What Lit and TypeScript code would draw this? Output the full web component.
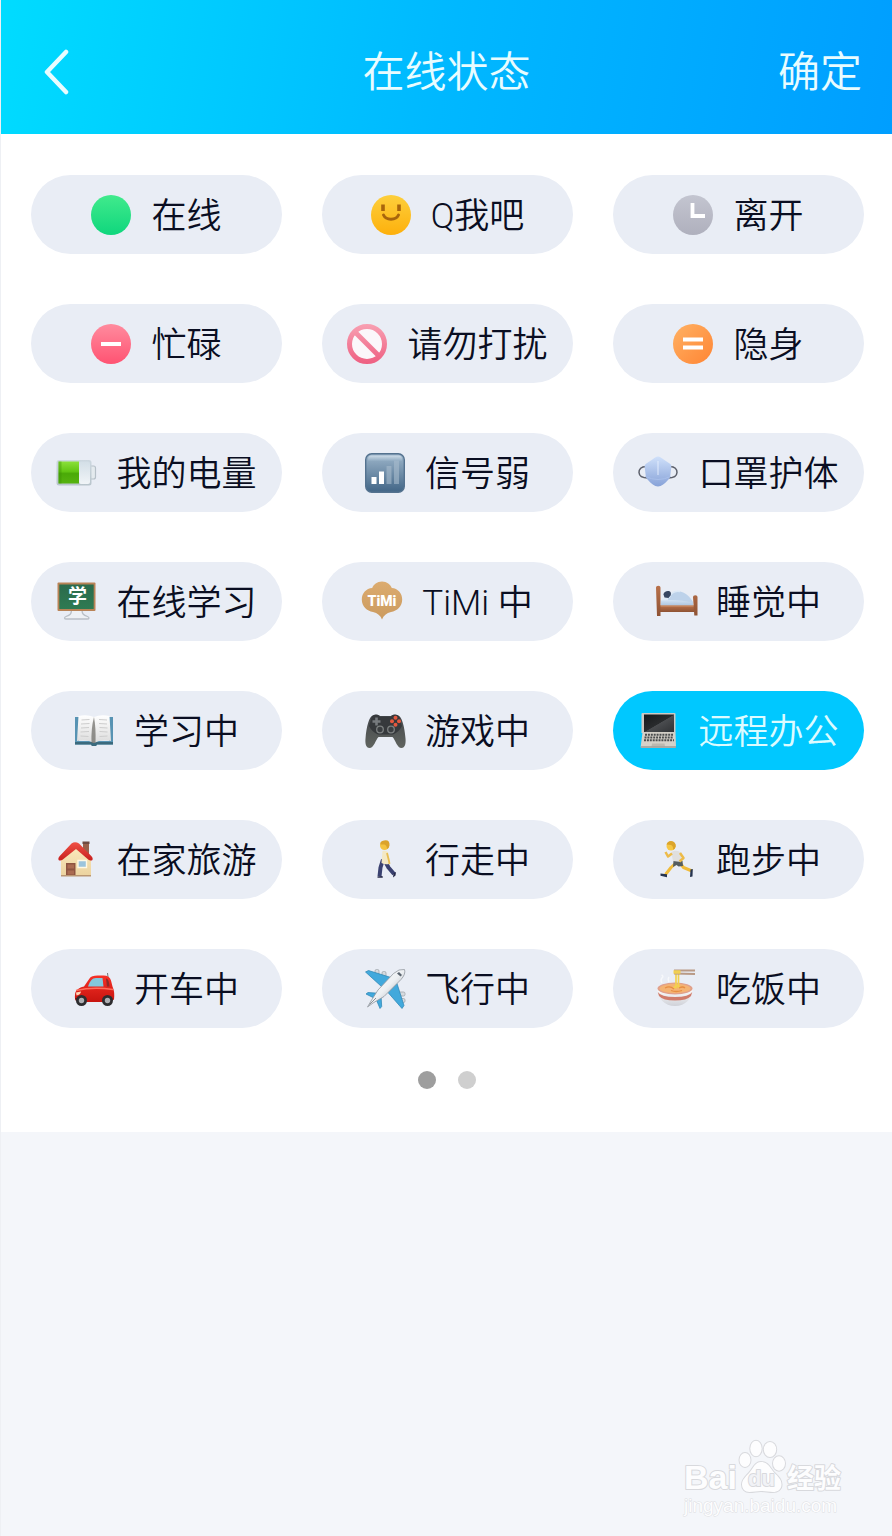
import { LitElement, html, svg, css, SVGTemplateResult } from "lit";
import { customElement, property, state } from "lit/decorators.js";
import { classMap } from "lit/directives/class-map.js";

interface Status {
  id: string;
  label: string;
}

const STATUSES: Status[] = [
  { id: "online", label: "在线" },
  { id: "qme", label: "Q我吧" },
  { id: "away", label: "离开" },
  { id: "busy", label: "忙碌" },
  { id: "dnd", label: "请勿打扰" },
  { id: "invisible", label: "隐身" },
  { id: "battery", label: "我的电量" },
  { id: "signal", label: "信号弱" },
  { id: "mask", label: "口罩护体" },
  { id: "class", label: "在线学习" },
  { id: "timi", label: "TiMi 中" },
  { id: "sleep", label: "睡觉中" },
  { id: "study", label: "学习中" },
  { id: "game", label: "游戏中" },
  { id: "remote", label: "远程办公" },
  { id: "home", label: "在家旅游" },
  { id: "walk", label: "行走中" },
  { id: "run", label: "跑步中" },
  { id: "drive", label: "开车中" },
  { id: "fly", label: "飞行中" },
  { id: "eat", label: "吃饭中" },
];

/* Vertical two-stop gradient shared by most of the icons. */
const fade = (id: string, from: string, to: string) => svg`
  <linearGradient id=${id} x1="0" y1="0" x2="0" y2="1">
    <stop offset="0" stop-color=${from}></stop>
    <stop offset="1" stop-color=${to}></stop>
  </linearGradient>`;

const ICONS: Record<string, SVGTemplateResult> = {
  online: svg`
    ${fade("g", "#41ea8c", "#0fd67d")}
    <circle cx="20" cy="20" r="20" fill="url(#g)"></circle>`,

  qme: svg`
    ${fade("g", "#fdcf3c", "#fdb00c")}
    <circle cx="20" cy="20" r="20" fill="url(#g)"></circle>
    <path d="M12 9.500v6.500M28 9.500v6.500" stroke="#a8650c" stroke-width="3.600"></path>
    <path d="M12.500 20c2.500 5.500 12.500 5.500 15 0" fill="none" stroke="#a8650c" stroke-width="3" stroke-linecap="round"></path>`,

  away: svg`
    ${fade("g", "#c3c5d0", "#afb0bd")}
    <circle cx="20" cy="20" r="20" fill="url(#g)"></circle>
    <path d="M19.500 8v13h12.500" fill="none" stroke="#fff" stroke-width="3.800"></path>`,

  busy: svg`
    ${fade("g", "#ff8b9e", "#ff5372")}
    <circle cx="20" cy="20" r="20" fill="url(#g)"></circle>
    <rect x="10" y="18" width="20" height="4" fill="#fff"></rect>`,

  dnd: svg`
    <linearGradient id="g" gradientUnits="userSpaceOnUse" x1="0" y1="0" x2="0" y2="40">
      <stop offset="0" stop-color="#f8a0b2"></stop>
      <stop offset="1" stop-color="#ee5f81"></stop>
    </linearGradient>
    <circle cx="20" cy="20" r="17.500" fill="#fbf7fa" stroke="url(#g)" stroke-width="5"></circle>
    <path d="M8 8l24 24" stroke="url(#g)" stroke-width="5"></path>`,

  invisible: svg`
    <linearGradient id="g" x1="0" y1="0" x2="1" y2="1">
      <stop offset="0" stop-color="#ffb163"></stop>
      <stop offset="1" stop-color="#ff8534"></stop>
    </linearGradient>
    <circle cx="20" cy="20" r="20" fill="url(#g)"></circle>
    <rect x="10" y="13.500" width="20" height="4" fill="#fff"></rect>
    <rect x="10" y="21.500" width="20" height="4" fill="#fff"></rect>`,

  battery: svg`
    ${fade("b", "#cdd8e0", "#b9c5cc")}
    ${fade("w", "#d3dfe7", "#f0f4f7")}
    <linearGradient id="g" x1="0" y1="0" x2="0" y2="1">
      <stop offset="0" stop-color="#8be03a"></stop>
      <stop offset="0.450" stop-color="#62c614"></stop>
      <stop offset="0.550" stop-color="#4aaa08"></stop>
      <stop offset="1" stop-color="#56b30f"></stop>
    </linearGradient>
    <rect x="33" y="13" width="6.500" height="13" rx="2" fill="#e4eaee" stroke="#b6c0c8" stroke-width="1.200"></rect>
    <rect x="0.500" y="7" width="35" height="25.500" rx="2.500" fill="url(#b)"></rect>
    <rect x="23" y="8.500" width="11" height="22.500" rx="2" fill="url(#w)"></rect>
    <rect x="2.500" y="8.500" width="20.500" height="22" fill="url(#g)"></rect>
    <rect x="2.500" y="8.500" width="3" height="22" fill="#3c9204" opacity="0.400"></rect>`,

  signal: svg`
    ${fade("g", "#9eb6cb", "#416586")}
    ${fade("h", "#d9e5ef", "#90abc2")}
    <rect x="0.700" y="0.700" width="38.600" height="38.600" rx="6" fill="url(#g)" stroke="#54728f" stroke-width="1.400"></rect>
    <path d="M3 6q0-3.500 3.500-3.500h27q3.500 0 3.500 3.500v2H3z" fill="url(#h)" opacity="0.800"></path>
    <rect x="6.500" y="24" width="5" height="7" fill="#fff"></rect>
    <rect x="14" y="18.500" width="5" height="12.500" fill="#fff"></rect>
    <rect x="21.500" y="13" width="5" height="18" fill="#a9bccd" opacity="0.600"></rect>
    <rect x="29" y="7.500" width="5" height="23.500" fill="#a9bccd" opacity="0.600"></rect>`,

  mask: svg`
    ${fade("g", "#cfe0fa", "#87a2d8")}
    <path d="M9 13.500C3 13 .800 16.500 1 19.500s3 5.500 9 5.500M31 13.500c6-.500 8.200 3 8 6s-3 5.500-9 5.500" fill="none" stroke="#5d616c" stroke-width="1.500"></path>
    <path d="M20 3.500c2 0 3.500 1.500 6 3.200l6 4c1.200 1 1.500 2 1.300 3.500l-1 8.300c-.200 2-.900 3-2.300 4.500-3 3.500-6.500 6.500-10 6.500s-7-3-10-6.500c-1.400-1.500-2.100-2.500-2.300-4.500l-1-8.300c-.200-1.500.100-2.500 1.300-3.500l6-4c2.500-1.700 4-3.200 6-3.200z" fill="url(#g)"></path>
    <path d="M20 8v14" stroke="#e9f1ff" stroke-width="1.500" opacity="0.600"></path>
    <path d="M7.500 23.500q12.500 6 25 0" fill="none" stroke="#a8bfea" stroke-width="1"></path>`,

  class: svg`
    ${fade("g", "#2b6b4c", "#2e7a52")}
    <path d="M15.500 28c0 4-1.500 5-5.500 6.500-2 .800-2 2.500.500 2.500h20.500c2.500 0 2.500-1.700.500-2.500C27.500 33 26 32 26 28" fill="#eef1f5" stroke="#b9bfc6" stroke-width="1.300"></path>
    <rect x="1.500" y="0.500" width="38" height="28.500" rx="1" fill="#b98356"></rect>
    <rect x="3.300" y="2.500" width="34.400" height="24.500" fill="url(#g)"></rect>
    <text class="glyph-study" x="21.500" y="21" text-anchor="middle">学</text>`,

  timi: svg`
    ${fade("g", "#dcac70", "#cb9a5e")}
    <path d="M20 -.500c5 0 8.500 3 9.800 6.500 6 .500 10.400 5 10.400 11.500 0 7-5.200 11.500-11.200 12.500-4.500 1-7.500 3.500-9 7.500-1.500-4-4.500-6.500-9-7.500-6-1-11.200-5.500-11.200-12.500 0-6.500 4.400-11 10.400-11.500C11.500 2.500 15 -.500 20 -.500z" fill="url(#g)"></path>
    <text class="glyph-timi" x="20" y="24" text-anchor="middle">TiMi</text>`,

  sleep: svg`
    ${fade("w", "#b9714a", "#8e5233")}
    ${fade("q", "#d3e3f4", "#8eacd0")}
    <path d="M5 18l9-4.500h10l12 6V28H5z" fill="#dfe9f5"></path>
    <path d="M12 17c2-6 7-8.500 12-7.500s10 5 13 10.500v4l-24-3z" fill="#bdd2ea"></path>
    <path d="M5 18.500c8-1 22-1 32 2.500V28H5z" fill="url(#q)"></path>
    <path d="M13 16c2-5 6-7.500 11-6.500" fill="none" stroke="#dce9f7" stroke-width="1.500"></path>
    <path d="M7.500 12.500c0-2.500 3-4 5.500-3.500 2 .500 2.500 2.500 1.500 4.500l-2 2.500-4-.500z" fill="#394660"></path>
    <path d="M4 23.500h34V30H4z" fill="url(#w)"></path>
    <path d="M4 24h34" stroke="#d0936c" stroke-width="1.200"></path>
    <path d="M0 5.500q0-1.800 2.300-1.800T4.500 5.500V34H1zM37 15q0-1.800 2.300-1.800T41.500 15v18.500h-3.200z" fill="url(#w)"></path>`,

  study: svg`
    ${fade("p", "#ffffff", "#dcdcdc")}
    <path d="M1 6h4v24h30V6h4v27.500H23l-1 1.500h-4l-1-1.500H1z" fill="#5793b3"></path>
    <path d="M1 33.500V31h38v2.500H23l-1 1.500h-4l-1-1.500z" fill="#3b6a7d"></path>
    <path d="M4.500 5Q13 3 20 6q7-3 15.500-1l1.500 25q-10-2-17 2-7-4-17-2z" fill="url(#p)"></path>
    <path d="M20 6q-3 11-2.500 26h4Q22 17 20 6z" fill="#6a6863" opacity="0.700"></path>
    <path d="M7.500 9l8-.500M7 13l8.500-.500M7 17l8-.500M6.500 21l8.500-.500M6.500 25l8 .500M25 8.500l8 .500M25 12.500l8 .500M25.500 16.500l8 .500M25.500 20.500l8 .500M25.500 25.500l8-.500" stroke="#cdcdcd" stroke-width="1"></path>`,

  game: svg`
    ${fade("g", "#44474b", "#60645f")}
    <path d="M8 4.500c2-1.500 5-1.500 7 .500h11c2-2 5-2 7-.500 4 1 6.500 11 7.500 23 .500 5-.500 9.500-4 9.500-4.500 0-6-8-9-11h-14c-3 3-4.500 11-9 11-3.500 0-4.500-4.500-4-9.500C1.500 15.500 4 5.500 8 4.500z" fill="url(#g)"></path>
    <path d="M7 5c3-2 6-1.500 8 .700h11c2-2.200 5-2.700 8-.700l3 10q-3 6-9 8.500H13Q7 21 4 15z" fill="#36393c"></path>
    <path d="M11.500 6.500v8M7.500 10.500h8" stroke="#777b7e" stroke-width="2.600"></path>
    <g fill="#e5583e"><circle cx="30.500" cy="6.700" r="2"></circle><circle cx="30.500" cy="13.700" r="2"></circle><circle cx="27" cy="10.200" r="2"></circle><circle cx="34" cy="10.200" r="2"></circle></g>
    <g fill="#3a3d40" stroke="#7d8181" stroke-width="1.300"><circle cx="15" cy="18.500" r="3.300"></circle><circle cx="26" cy="18.500" r="3.300"></circle></g>`,

  remote: svg`
    <linearGradient id="s" x1="0" y1="0" x2="1" y2="1">
      <stop offset="0" stop-color="#17191b"></stop>
      <stop offset="0.500" stop-color="#292b2d"></stop>
      <stop offset="0.520" stop-color="#4a4c4f"></stop>
      <stop offset="1" stop-color="#303235"></stop>
    </linearGradient>
    <path d="M4.500 2h32q1 0 1 1v19h-34V3q0-1 1-1z" fill="#cfcac3"></path>
    <path d="M6 3.500h30V21H6z" fill="url(#s)"></path>
    <path d="M4.500 21.500h33l.500 14q0 1.500-1.500 1.500H4q-1.500 0-1.300-1.500z" fill="#d5d1c9"></path>
    <g fill="none" stroke="#4b4d4e" stroke-width="1.900" stroke-dasharray="2 .900">
      <path d="M7 23.700h28M6.500 26.500h29M6 29.300h30"></path>
    </g>
    <path d="M14 32.500h12.500l.500 3H13.500z" fill="#bdb8af"></path>
    <path d="M3 36h35" stroke="#9e9c97" stroke-width="1.500"></path>`,

  home: svg`
    ${fade("r", "#ef5145", "#c8201e")}
    ${fade("w", "#fae9bb", "#ecd3a0")}
    <path d="M27 2.500h6V16h-6z" fill="#99604a"></path>
    <path d="M26.500 1.500h7v2.500h-7z" fill="#6f4a40"></path>
    <path d="M5 19L19.500 7 35 19v17H5z" fill="url(#w)"></path>
    <path d="M2.500 20Q1.800 18 3.500 16.200L15.500 3.500Q19 1 23 3.500L35.500 16.200Q37.300 18 36.500 20q-2 1.300-4-.200L20 9 6.500 19.800q-2 1.500-4 .200z" fill="url(#r)"></path>
    <path d="M10 23h9.500v13H10z" fill="#8e5541"></path>
    <path d="M11.500 24.500h6.500v4h-6.500zM11.500 30.500h6.500v4h-6.500z" fill="#aa6b51"></path>
    <path d="M22 20.500h8.500v7H22z" fill="#9cc4dc" stroke="#fff8e4" stroke-width="1.400"></path>
    <path d="M5 35h30v1.500H5z" fill="#ba9773"></path>`,

  walk: svg`
    <path d="M18 19.500l-2.500 8-1 9M19.500 20l4 7.500 5.500 6.500" fill="none" stroke="#3a4170" stroke-width="4" stroke-linejoin="round"></path>
    <path d="M12.500 36.500l5-.500.300 1.800h-5.300zM28.500 33.500l2.500-1.500-.500 3.500-2.500 2z" fill="#252848"></path>
    <path d="M17.500 11q4-1 5.500 1.500l1.500 6.500-.500 5q-4 1-7.500-1l.500-6z" fill="#f3e8c5"></path>
    <path d="M22 13l2 8 .500 3" fill="none" stroke="#e8bd52" stroke-width="1.800"></path>
    <circle cx="19.500" cy="5.500" r="4.500" fill="#f4c341"></circle>
    <path d="M15.300 4.500Q15 1 19 .500q6-1 5.500 5-.500 3-2.500 3.500 0-3.500-2.500-4.500z" fill="#dba32c"></path>`,

  run: svg`
    <path d="M21 22l-6 5.500-5.500 7M23 21.500l4.500 6 8.500 3.500" fill="none" stroke="#f0bb39" stroke-width="3" stroke-linejoin="round"></path>
    <path d="M4.500 33.500l6.500.800v3l-6.500-1.500zM34.500 29.500l2.300-.500-.300 7.500-2.500 .500z" fill="#26344f"></path>
    <path d="M17.500 20.500l9 .500.500 5-4.500.500-2-1.500-3.500 2z" fill="#555d5f"></path>
    <path d="M15.500 12q5-3 10 1l-.500 9-8-1-1-5z" fill="#e0dfde"></path>
    <path d="M16 13.500l-4 3-2.500-4.500M24 13l3.500 5-4 3.500" fill="none" stroke="#edbb49" stroke-width="2.500" stroke-linejoin="round"></path>
    <circle cx="15" cy="6" r="4.500" fill="#f6c744"></circle>
    <path d="M10.500 4.500Q11.500 1 15 1q5 .500 4.800 5.500Q19 9.500 17 9.500q.500-3.500-2-4.500z" fill="#dba42b"></path>`,

  drive: svg`
    ${fade("r", "#f73127", "#c7140f")}
    <path d="M33.500 4l1.200 9" stroke="#777" stroke-width="1"></path>
    <path d="M1 26c0-4.500 3-7 9-8.500l5.500-8c1.500-2.300 4-3 8-3h6c4 0 6.500 1.500 7.500 5l1.500 6c2 4 2 9 1.500 13L36 33H5c-3.500 0-4.500-3-4-7z" fill="url(#r)"></path>
    <path d="M14 17.500c2-5.500 4-8.500 8-8.500h6.500l1 8.500z" fill="#83c8dc"></path>
    <path d="M32 9.500c2 .500 3 2 3.500 8H33z" fill="#8d2a28"></path>
    <path d="M2 21.500q17-4 37-1" fill="none" stroke="#ff6e5c" stroke-width="1.400"></path>
    <path d="M2 23.500l5-1q-.500 3.500-4.500 4z" fill="#ffd6b8"></path>
    <path d="M1 29h9v3H2z" fill="#7c1511"></path>
    <circle cx="7.500" cy="31.500" r="5.500" fill="#2d2d30"></circle><circle cx="7.500" cy="31.500" r="2.700" fill="#aeb0b4"></circle>
    <circle cx="33.500" cy="31.500" r="5.500" fill="#2d2d30"></circle><circle cx="33.500" cy="31.500" r="2.700" fill="#aeb0b4"></circle>`,

  fly: svg`
    <linearGradient id="f" x1="0" y1="0" x2="1" y2="1">
      <stop offset="0" stop-color="#ffffff"></stop>
      <stop offset="0.500" stop-color="#edf0f3"></stop>
      <stop offset="1" stop-color="#8a9099"></stop>
    </linearGradient>
    <g fill="#d6dade" stroke="#a0a6ac" stroke-width="0.800">
      <rect x="10" y="0.500" width="4" height="6" rx="1.500"></rect><rect x="17" y="2.500" width="4" height="6" rx="1.500"></rect>
      <rect x="34" y="23" width="6" height="4" rx="1.500"></rect><rect x="34" y="29.500" width="6" height="4" rx="1.500"></rect>
    </g>
    <path d="M.500 3l3-1.500L26 8.500 17 18zM32 14.500L39 36.500l-2 3-14-16zM1 25l2-1.500 11 .800-4 5.200zM11 30l5-4 .700 11.500-1.700 2z" fill="#42a9dc" stroke="#2783b2" stroke-width="0.700"></path>
    <path d="M39.500.500q1.500 4.500-3.500 10L19 27.500 8 34l-5.500 4 3.500-6 7-11L28.500 4.500Q34-.500 39.500.500z" fill="url(#f)" stroke="#9298a0" stroke-width="0.800"></path>
    <path d="M34 3l3 3-1.500 1.500-3.500-3z" fill="#59636e"></path>
    <path d="M11 29l-6.500 6.500" stroke="#8b9198" stroke-width="1"></path>`,

  eat: svg`
    ${fade("b", "#ffffff", "#cfd1d8")}
    <path d="M6 14q-2-3 0-5t-.500-3M13 13q-1.500-3 0-5" fill="none" stroke="#fff" stroke-width="1.500" opacity="0.600"></path>
    <path d="M1.500 19.500c0 10 7 17.500 17.500 17.500s17.500-7.500 17.500-17.500z" fill="url(#b)"></path>
    <path d="M1.800 23q3 5 17.200 5t17.200-5l-1.200 4q-4 4.500-16 4.500T3 27z" fill="#d07c6c"></path>
    <ellipse cx="19" cy="19.500" rx="17.500" ry="6" fill="#e0a08c"></ellipse>
    <ellipse cx="19" cy="19.500" rx="15.500" ry="4.700" fill="#f4b373"></ellipse>
    <path d="M20 3.500v16M22.500 4v15M17.500 19q4-5 7 0" fill="none" stroke="#f3d14d" stroke-width="1.700"></path>
    <path d="M9 19q5-2.500 9 1m5-1q4-2 6 0m-14 2.500q5 2 11 0" fill="none" stroke="#e78d42" stroke-width="1.300"></path>
    <path d="M18 1.500l21 0M18 4.500l21 .500" stroke="#b99a86" stroke-width="1.900"></path>
    <path d="M17.500 3h7" stroke="#f1cf50" stroke-width="3.500"></path>`,
};

@customElement("status-icon")
export class StatusIcon extends LitElement {
  @property() name = "";

  static styles = css`
    :host {
      display: block;
      flex: none;
      width: 40px;
      height: 40px;
    }
    .icon {
      display: block;
      width: 100%;
      height: 100%;
      overflow: visible;
    }
    .glyph-study {
      font: 700 19px "Noto Sans CJK SC", sans-serif;
      fill: #fff;
    }
    .glyph-timi {
      font: 900 14px Roboto, "Liberation Sans", sans-serif;
      fill: #fff;
    }
  `;

  render() {
    return html`<svg class="icon" viewBox="0 0 40 40" aria-hidden="true">${ICONS[this.name]}</svg>`;
  }
}

@customElement("site-watermark")
export class SiteWatermark extends LitElement {
  static styles = css`
    :host {
      display: block;
      width: 160px;
      height: 80px;
    }
    .mark {
      display: block;
      overflow: visible;
      fill: #fdfdfe;
      stroke: #d8d9dd;
      stroke-width: 2px;
      stroke-linejoin: round;
      paint-order: stroke;
    }
    .bai {
      font: 700 34px "Liberation Sans", sans-serif;
    }
    .du {
      font: 700 22px "Liberation Sans", sans-serif;
      fill: #f1f2f6;
    }
    .cn {
      font: 700 27px "Noto Sans CJK SC", sans-serif;
    }
    .url {
      font: 400 19px "Liberation Sans", sans-serif;
      stroke: #dddee2;
      stroke-width: 1px;
    }
  `;

  render() {
    return html`
      <svg class="mark" width="160" height="80" viewBox="0 0 160 80" role="img" aria-label="Baidu 经验">
        <text class="bai" x="0" y="51">Bai</text>
        <ellipse cx="61" cy="22" rx="5.500" ry="7"></ellipse>
        <ellipse cx="72" cy="10.500" rx="5.700" ry="7.700"></ellipse>
        <ellipse cx="86" cy="11.500" rx="6.200" ry="7.500"></ellipse>
        <ellipse cx="95" cy="25.500" rx="6" ry="7.200"></ellipse>
        <path d="M77 24c7 0 9 6 13 10.500 4 4 7.500 7 7.500 12 0 5-4 7.500-8.500 7.500-4 0-8-1-12-1s-7 1-11.500 1c-4.500 0-7.500-3-7.500-7.500 0-5 4-8 7.500-12C69.500 30 71 24 77 24z"></path>
        <text class="du" x="64" y="48">du</text>
        <text class="cn" x="103" y="50">经验</text>
        <text class="url" x="0" y="74">jingyan.baidu.com</text>
      </svg>
    `;
  }
}

@customElement("app-root")
export class AppRoot extends LitElement {
  @state() private selected = "remote";
  @state() private page = 0;

  static styles = css`
    :host {
      display: flex;
      flex-direction: column;
      box-sizing: border-box;
      min-height: 100vh;
      border-left: 1px solid #eef0f4;
      background: #f4f6fa;
      color: #0a0e22;
      font-family: Roboto, "Noto Sans CJK SC", sans-serif;
      font-weight: 350;
    }
    button {
      margin: 0;
      padding: 0;
      border: 0;
      background: none;
      color: inherit;
      font: inherit;
      cursor: pointer;
    }
    .bar {
      display: grid;
      grid-template-columns: 1fr auto 1fr;
      align-items: center;
      box-sizing: border-box;
      height: 134px;
      padding: 12px 30px 0;
      background: linear-gradient(100deg, #00dcff, #00b8ff 50%, #009eff);
      color: #e8fcff;
      font-size: 42px;
      line-height: 60px;
    }
    .back {
      justify-self: start;
      display: flex;
      padding: 0 10px;
    }
    .title {
      margin: 0;
      font: inherit;
    }
    .confirm {
      justify-self: end;
    }
    .panel {
      padding: 41px 0 43px;
      background: #fff;
    }
    .grid {
      display: grid;
      grid-template-columns: repeat(3, 1fr);
      gap: 50px 40px;
      padding: 0 28px 0 30px;
    }
    .pill {
      display: flex;
      align-items: center;
      justify-content: center;
      gap: 20px;
      height: 79px;
      border-radius: 40px;
      background: #e9edf5;
      font-size: 35px;
      line-height: 50px;
      white-space: nowrap;
    }
    .pill.on {
      background: #00c8ff;
      color: #dcfbff;
    }
    .label {
      padding-top: 4px;
    }
    .pager {
      display: flex;
      justify-content: center;
      gap: 22px;
      margin-top: 43px;
    }
    .dot {
      width: 18px;
      height: 18px;
      border-radius: 50%;
      background: #cfcfcf;
    }
    .dot.on {
      background: #9e9e9e;
    }
    .foot {
      display: flex;
      justify-content: flex-end;
      margin-top: auto;
      padding: 0 48px 18px 0;
    }
  `;

  render() {
    return html`
      <header class="bar">
        <button class="back" aria-label="返回">
          <svg width="32" height="48" viewBox="0 0 32 48" aria-hidden="true">
            <path d="M25 3L6 23L25 43" fill="none" stroke="#e8fcff" stroke-width="4.500" stroke-linecap="round" stroke-linejoin="round"></path>
          </svg>
        </button>
        <h1 class="title">在线状态</h1>
        <button class="confirm">确定</button>
      </header>
      <main class="panel">
        <div class="grid">
          ${STATUSES.map(
            (s) => html`
              <button
                class=${classMap({ pill: true, on: s.id === this.selected })}
                aria-pressed=${s.id === this.selected ? "true" : "false"}
                @click=${() => (this.selected = s.id)}
              >
                <status-icon name=${s.id}></status-icon>
                <span class="label">${s.label}</span>
              </button>
            `
          )}
        </div>
        <nav class="pager" aria-label="分页">
          ${[0, 1].map(
            (i) => html`
              <button
                class=${classMap({ dot: true, on: i === this.page })}
                aria-label=${`第 ${i + 1} 页`}
                @click=${() => (this.page = i)}
              ></button>
            `
          )}
        </nav>
      </main>
      <footer class="foot"><site-watermark></site-watermark></footer>
    `;
  }
}
